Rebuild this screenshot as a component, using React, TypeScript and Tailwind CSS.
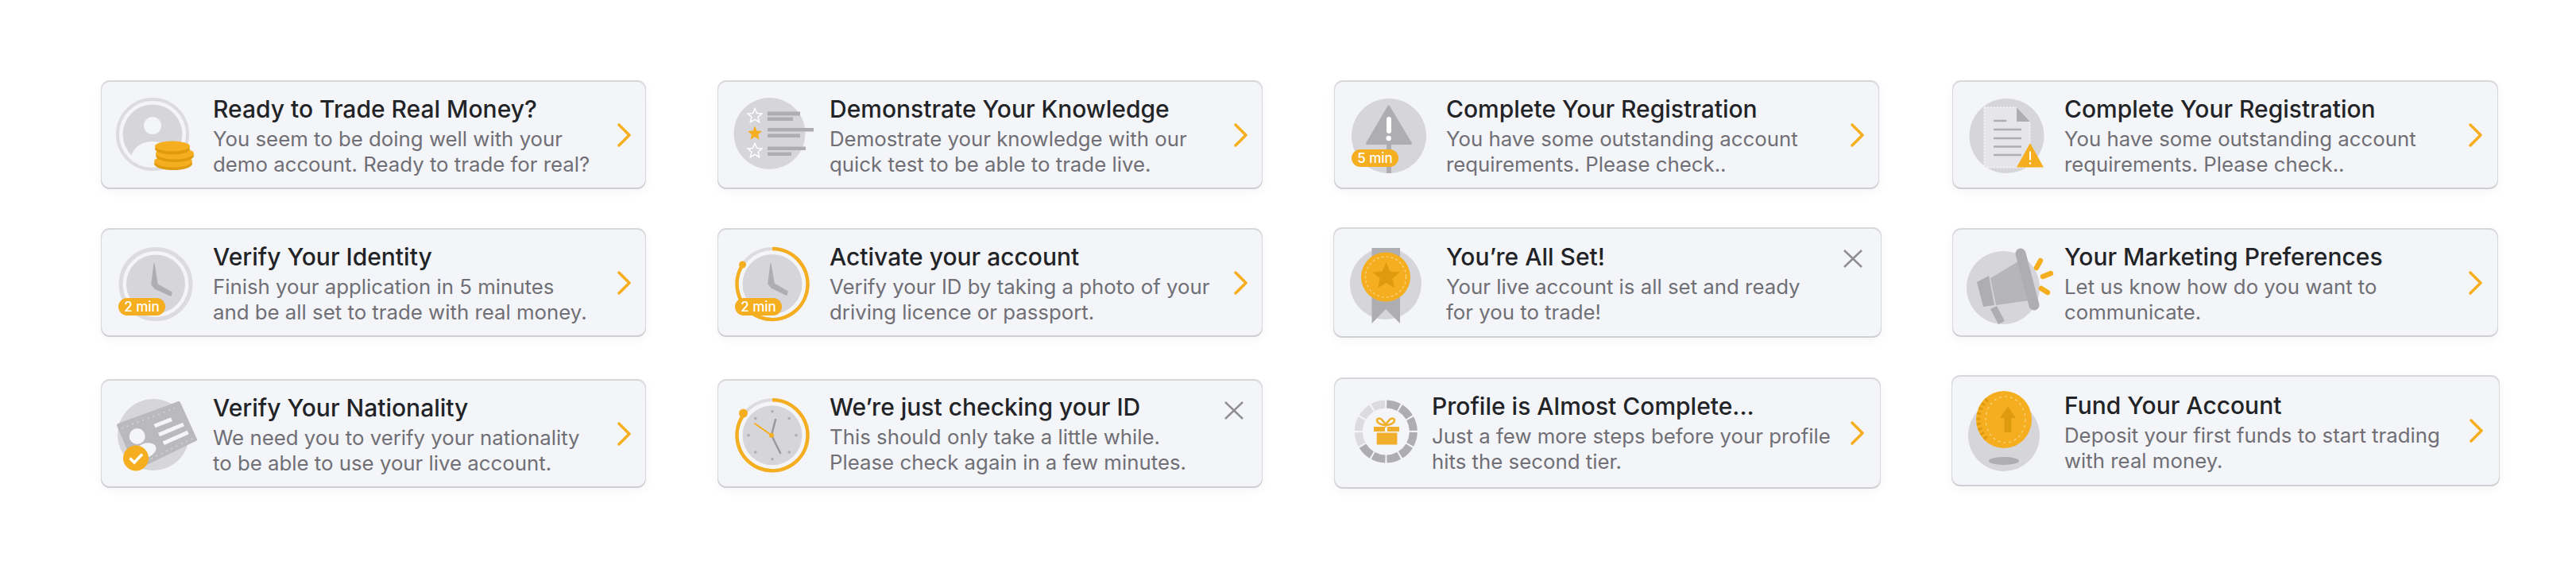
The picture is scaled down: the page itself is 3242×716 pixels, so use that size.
import React from 'react';

const GOLD = '#f5ae1f';
const DARK_GOLD = '#df9b10';
const DISC = '#d5d5da';
const RING = '#dcdce0';
const BAR = '#aeaeb2';
const PAPER = '#f4f5f9';

const starPoints = (cx: number, cy: number, r: number) => {
  const pts: string[] = [];
  for (let i = 0; i < 10; i++) {
    const rad = i % 2 === 0 ? r : r * 0.45;
    const a = (Math.PI / 5) * i - Math.PI / 2;
    pts.push(`${(cx + rad * Math.cos(a)).toFixed(1)},${(cy + rad * Math.sin(a)).toFixed(1)}`);
  }
  return pts.join(' ');
};

const Art = ({ children }: { children: React.ReactNode }) => (
  <svg width="140" height="134" viewBox="0 0 140 134" className="block overflow-visible">
    {children}
  </svg>
);

const Badge = ({ label, className }: { label: string; className: string }) => (
  <span className={`absolute flex h-[22px] w-[59px] items-center justify-center rounded-full bg-[#f5ae1f] text-[17px] font-medium leading-none text-white ${className}`}>
    {label}
  </span>
);

const PersonIcon = () => (
  <Art>
    <circle cx="64" cy="66" r="44" fill="none" stroke={RING} strokeWidth="4" />
    <circle cx="64" cy="66" r="37.5" fill={DISC} />
    <circle cx="64" cy="55" r="11" fill={PAPER} />
    <path d="M37 93 C42 80 52 75 64 75 C76 75 86 80 91 93 C84 100 74 103.500 64 103.500 C54 103.500 44 100 37 93Z" fill={PAPER} />
    <ellipse cx="90" cy="103" rx="24" ry="8" fill={DARK_GOLD} />
    <ellipse cx="90" cy="100" rx="24" ry="7.500" fill={GOLD} />
    <ellipse cx="92" cy="93" rx="24" ry="8" fill={DARK_GOLD} />
    <ellipse cx="92" cy="90" rx="24" ry="7.500" fill={GOLD} />
    <ellipse cx="89" cy="84" rx="22" ry="7.500" fill={DARK_GOLD} />
    <ellipse cx="89" cy="81" rx="22" ry="6.500" fill={GOLD} />
  </Art>
);

const KnowledgeIcon = () => (
  <Art>
    <circle cx="64.500" cy="65" r="45" fill={DISC} />
    <polygon points={starPoints(46, 43, 9.500)} fill={DISC} stroke="#fff" strokeWidth="1.500" />
    <polygon points={starPoints(46, 65, 9.500)} fill={GOLD} />
    <polygon points={starPoints(46, 87, 9.500)} fill={DISC} stroke="#fff" strokeWidth="1.500" />
    <rect x="62" y="37.500" width="41" height="5" fill={BAR} />
    <rect x="62" y="44.500" width="32" height="4.500" fill={BAR} />
    <rect x="62" y="58" width="58" height="4.500" fill={BAR} />
    <rect x="62" y="65.500" width="41" height="4.500" fill={BAR} />
    <rect x="62" y="81.500" width="48" height="4.500" fill={BAR} />
    <rect x="62" y="88.500" width="30" height="4.500" fill={BAR} />
  </Art>
);

const WarningIcon = () => (
  <Art>
    <circle cx="68" cy="68" r="47" fill={DISC} />
    <rect x="65" y="75" width="6" height="40" fill={BAR} />
    <path d="M67.700 31 L95.500 77.500 L40.500 77.500 Z" fill={BAR} stroke={BAR} strokeWidth="3" strokeLinejoin="round" />
    <rect x="65" y="44" width="6" height="21" rx="3" fill="#fff" />
    <circle cx="67.700" cy="71" r="3.200" fill="#fff" />
  </Art>
);

const DocumentIcon = () => (
  <Art>
    <circle cx="67.500" cy="68" r="47" fill={DISC} />
    <path d="M39 32 H80 L97 50 V108 H39 Z" fill="#e5e5ea" stroke="#fff" strokeWidth="1" strokeDasharray="2 2" />
    <path d="M80 32 L97 50 H80 Z" fill={BAR} />
    <g stroke={BAR} strokeWidth="2.500">
      <path d="M51 49 H67" />
      <path d="M51 60 H86" />
      <path d="M51 71 H86" />
      <path d="M51 81.500 H86" />
      <path d="M51 92 H86" />
    </g>
    <path d="M97 77 L114 107.500 H80 Z" fill={GOLD} />
    <rect x="96" y="87.500" width="2" height="11" fill="#fff" />
    <circle cx="97" cy="102.500" r="1.300" fill="#fff" />
  </Art>
);

const ClockHands = ({ x, top, mid, endX, endY }: { x: number; top: number; mid: number; endX: number; endY: number }) => (
  <path d={`M${x} ${top} L${x - 3} ${mid - 2} L${x + 1} ${mid + 3} L${endX} ${endY + 2} L${endX + 1} ${endY - 2} L${x + 4} ${mid - 2} Z`} fill={BAR} stroke={BAR} strokeWidth="1.500" strokeLinejoin="round" />
);

const ClockIcon = () => (
  <Art>
    <circle cx="68" cy="68.500" r="44" fill="none" stroke={RING} strokeWidth="5" />
    <circle cx="68" cy="68.500" r="37" fill={DISC} />
    <ClockHands x={66} top={43} mid={71} endX={87} endY={81} />
  </Art>
);

const ProgressArc = ({ cy }: { cy: number }) => (
  <>
    <circle cx="68" cy={cy} r="44.500" fill="none" stroke={RING} strokeWidth="4" />
    <path d={`M68 ${cy - 44.5} A44.500 44.500 0 1 1 31 ${cy - 24.7}`} fill="none" stroke={GOLD} strokeWidth="4.500" />
  </>
);

const ActivateIcon = () => (
  <Art>
    <ProgressArc cy={68.5} />
    <circle cx="30.500" cy="44" r="4.500" fill={GOLD} />
    <circle cx="68" cy="68.500" r="37.500" fill={DISC} />
    <ClockHands x={66} top={43} mid={70} endX={86} endY={80} />
  </Art>
);

const MedalIcon = () => (
  <Art>
    <circle cx="65" cy="69" r="45" fill={DISC} />
    <path d="M47.500 24 H83 V119 L65 101 L47.500 119 Z" fill={BAR} />
    <circle cx="65" cy="60.500" r="31" fill={GOLD} />
    <circle cx="65" cy="60.500" r="25.500" fill="none" stroke="#f9d68b" strokeWidth="1.200" strokeDasharray="3 3" />
    <polygon points={starPoints(65.5, 60, 18)} fill={DARK_GOLD} />
  </Art>
);

const MegaphoneIcon = () => (
  <Art>
    <circle cx="63" cy="73" r="46" fill={DISC} />
    <path d="M51 98 L61 117" stroke={BAR} strokeWidth="9" />
    <path d="M30 66 L45 58 L52 95 L38 97 Z" fill={BAR} />
    <path d="M47 61 L82 40 L96 89 L54 95 Z" fill="#b5b5ba" />
    <path d="M85 30 L102 95" stroke={BAR} strokeWidth="13" strokeLinecap="round" />
    <g stroke={GOLD} strokeWidth="6.500" strokeLinecap="round">
      <path d="M110 39 L105 48" />
      <path d="M123 55 L113 59" />
      <path d="M111 74 L119 79" />
    </g>
  </Art>
);

const IdCardIcon = () => (
  <Art>
    <circle cx="65" cy="68" r="45" fill={DISC} />
    <path d="M21 56 L97 28 L118 74 L44 110 Z" fill="#b9b9be" stroke="#b9b9be" strokeWidth="4" strokeLinejoin="round" />
    <path d="M25 60 L96 33" stroke="#d5d5da" strokeWidth="1.500" strokeDasharray="2 5" />
    <path d="M62 98 L116 72" stroke="#d5d5da" strokeWidth="1.500" strokeDasharray="2 5" />
    <g stroke={PAPER} strokeWidth="5">
      <path d="M66.500 57 L88 48.700" />
      <path d="M72 68 L103 55" />
      <path d="M77.700 78.700 L108.700 65" />
    </g>
    <circle cx="44.700" cy="70" r="10" fill={PAPER} />
    <ellipse cx="55" cy="88" rx="14" ry="9" transform="rotate(-20 55 88)" fill={PAPER} />
    <circle cx="43" cy="97.500" r="16" fill={GOLD} />
    <path d="M35.500 97.500 L41 103 L51 92.500" fill="none" stroke="#fff" strokeWidth="3.500" />
  </Art>
);

const CheckingIcon = () => {
  const ticks = [0, 45, 90, 135, 180, 225, 270, 315];
  return (
    <Art>
      <ProgressArc cy={68.8} />
      <circle cx="31.500" cy="41" r="5.500" fill={GOLD} />
      <circle cx="68" cy="68.800" r="37.500" fill={DISC} />
      {ticks.map((deg) => (
        <circle
          key={deg}
          cx={68 + 30 * Math.cos((deg * Math.PI) / 180)}
          cy={68.8 + 30 * Math.sin((deg * Math.PI) / 180)}
          r="1.800"
          fill={BAR}
        />
      ))}
      <path d="M72 49 L67 68.800" stroke="#98989d" strokeWidth="2.500" strokeLinecap="round" />
      <path d="M67 68.800 L78 91" stroke="#98989d" strokeWidth="2.500" strokeLinecap="round" />
      <path d="M46 54 L67 68.800" stroke={GOLD} strokeWidth="2" strokeLinecap="round" />
      <circle cx="67" cy="68.800" r="3" fill={GOLD} />
    </Art>
  );
};

const GiftIcon = () => {
  const segments = Array.from({ length: 12 }, (_, i) => i);
  const r = 34.5;
  const seg = (2 * Math.PI * r) / 12;
  return (
    <Art>
      {segments.map((i) => (
        <circle
          key={i}
          cx="64.300"
          cy="66"
          r={r}
          fill="none"
          stroke={i >= 8 ? RING : BAR}
          strokeWidth="10"
          strokeDasharray={`${seg - 2} ${2 * Math.PI * r - seg + 2}`}
          transform={`rotate(${i * 30 - 90 + 1.5} 64.3 66)`}
        />
      ))}
      <path d="M64 58 C58 58 53 55 53 52 C53 49 57 49 59 51 C61 53 63 55 64 58 C65 55 67 53 69 51 C71 49 75 49 75 52 C75 55 70 58 64 58Z" fill="none" stroke="#f0ae2a" strokeWidth="2.500" />
      <rect x="49" y="60" width="14" height="6" fill="#f0ae2a" />
      <rect x="66" y="60" width="15" height="6" fill="#f0ae2a" />
      <rect x="52.700" y="67.500" width="25.700" height="15" rx="1" fill="#f0ae2a" />
    </Art>
  );
};

const CoinIcon = () => (
  <Art>
    <circle cx="65" cy="74" r="45" fill={DISC} />
    <ellipse cx="65" cy="106" rx="19" ry="5" fill={BAR} />
    <ellipse cx="65" cy="54" rx="35" ry="36" fill={GOLD} />
    {/* milled edge on the left of the coin */}
    <path d="M44.400 28.700 A32 33 0 0 0 44.400 79.300" fill="none" stroke={DARK_GOLD} strokeWidth="5" strokeDasharray="3 3.500" />
    <ellipse cx="67" cy="54" rx="25" ry="29" fill="none" stroke="#f9d68b" strokeWidth="1.200" strokeDasharray="3 4" />
    <path d="M70 37.500 L80 52 H74.500 V70 H65.500 V52 H60 Z" fill={DARK_GOLD} />
  </Art>
);

const Chevron = () => (
  <svg width="18" height="30" viewBox="0 0 18 30" className="shrink-0 self-center">
    <path d="M2 2 L15 15 L2 28" fill="none" stroke={GOLD} strokeWidth="3.500" strokeLinecap="round" strokeLinejoin="round" />
  </svg>
);

const Close = () => (
  <svg width="24" height="23" viewBox="0 0 24 23" className="shrink-0">
    <path d="M1 1 L23 22 M23 1 L1 22" fill="none" stroke="#8e8e93" strokeWidth="2.500" />
  </svg>
);

interface TaskCardProps {
  title: string;
  lines: [string, string];
  icon: React.ReactNode;
  badge?: React.ReactNode;
  dismiss?: boolean;
  box: string;
  pad?: string;
  slot?: string;
  arrow?: string;
}

const TaskCard = ({ title, lines, icon, badge, dismiss, box, pad = 'pt-[16px]', slot = 'w-[140px]', arrow = 'mr-[17px]' }: TaskCardProps) => (
  <div className={`flex rounded-[10px] bg-[#f4f5f9] shadow-[0_-1px_0_1px_#d8d8dc,0_1px_0_1px_#cfcfd4,0_4px_14px_rgba(0,0,0,0.05)] ${box}`}>
    <div className={`relative shrink-0 ${slot}`}>
      {icon}
      {badge}
    </div>
    <div className={`min-w-0 flex-1 whitespace-nowrap ${pad}`}>
      <div className="text-[30px] font-medium leading-[37px] text-[#222326]">{title}</div>
      <div className="mt-[3px] text-[25.8px] leading-[32px] text-[#6f6f75]">
        <div>{lines[0]}</div>
        <div>{lines[1]}</div>
      </div>
    </div>
    {dismiss ? (
      <div className="mr-[23px] mt-[26px] shrink-0"><Close /></div>
    ) : (
      <div className={`flex shrink-0 ${arrow}`}><Chevron /></div>
    )}
  </div>
);

const App = () => (
  <div className="flex h-[716px] w-[3242px] gap-[92px] overflow-hidden bg-white pl-[128px] pt-[103px] font-['Inter',sans-serif]">
    <div className="flex w-[684px] shrink-0 flex-col">
      <TaskCard box="h-[133px]" title="Ready to Trade Real Money?" lines={['You seem to be doing well with your', 'demo account. Ready to trade for real?']} icon={<PersonIcon />} />
      <TaskCard box="mt-[53px] h-[133px]" title="Verify Your Identity" lines={['Finish your application in 5 minutes', 'and be all set to trade with real money.']} icon={<ClockIcon />} badge={<Badge label="2 min" className="left-[21px] top-[86px]" />} />
      <TaskCard box="mt-[57px] h-[133px]" title="Verify Your Nationality" lines={['We need you to verify your nationality', 'to be able to use your live account.']} icon={<IdCardIcon />} />
    </div>
    <div className="flex w-[684px] shrink-0 flex-col">
      <TaskCard box="h-[133px]" title="Demonstrate Your Knowledge" lines={['Demostrate your knowledge with our', 'quick test to be able to trade live.']} icon={<KnowledgeIcon />} />
      <TaskCard box="mt-[53px] h-[133px]" title="Activate your account" lines={['Verify your ID by taking a photo of your', 'driving licence or passport.']} icon={<ActivateIcon />} badge={<Badge label="2 min" className="left-[21px] top-[86px]" />} />
      <TaskCard box="mt-[57px] h-[133px]" pad="pt-[15px]" dismiss title="We’re just checking your ID" lines={['This should only take a little while.', 'Please check again in a few minutes.']} icon={<CheckingIcon />} />
    </div>
    <div className="flex w-[684px] shrink-0 flex-col">
      <TaskCard box="h-[133px]" title="Complete Your Registration" lines={['You have some outstanding account', 'requirements. Please check..']} icon={<WarningIcon />} badge={<Badge label="5 min" className="left-[21px] top-[85px]" />} />
      <TaskCard box="-ml-[1px] mt-[52px] h-[135px] w-[688px]" pad="pt-[17px]" slot="w-[141px]" dismiss title="You’re All Set!" lines={['Your live account is all set and ready', 'for you to trade!']} icon={<MedalIcon />} />
      <TaskCard box="mt-[54px] h-[136px] w-[686px]" slot="w-[122px]" arrow="mr-[19px]" title="Profile is Almost Complete..." lines={['Just a few more steps before your profile', 'hits the second tier.']} icon={<GiftIcon />} />
    </div>
    <div className="ml-[2px] flex w-[685px] shrink-0 flex-col">
      <TaskCard box="h-[133px]" arrow="mr-[18px]" title="Complete Your Registration" lines={['You have some outstanding account', 'requirements. Please check..']} icon={<DocumentIcon />} />
      <TaskCard box="mt-[53px] h-[133px]" arrow="mr-[18px]" title="Your Marketing Preferences" lines={['Let us know how do you want to', 'communicate.']} icon={<MegaphoneIcon />} />
      <TaskCard box="-ml-[1px] mt-[52px] h-[136px] w-[688px]" pad="pt-[18px]" slot="w-[141px]" arrow="mr-[19px]" title="Fund Your Account" lines={['Deposit your first funds to start trading', 'with real money.']} icon={<CoinIcon />} />
    </div>
  </div>
);

export default App;
